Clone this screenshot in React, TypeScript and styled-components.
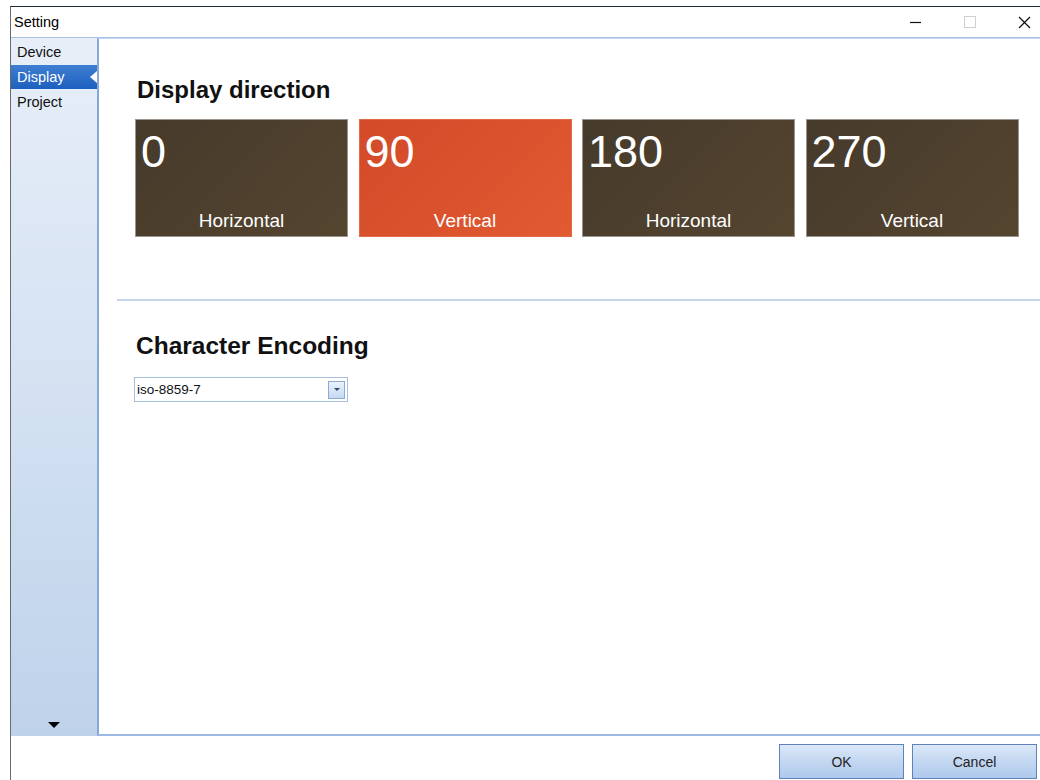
import React, { useState } from 'react';
import styled, { createGlobalStyle } from 'styled-components';

const GlobalStyle = createGlobalStyle`
  html, body {
    margin: 0;
    padding: 0;
    background: #fff;
    font-family: "Liberation Sans", Arial, sans-serif;
  }
`;

const Page = styled.div`
  padding: 6px 0 0 10px;
  width: 1040px;
  height: 780px;
  box-sizing: border-box;
  overflow: hidden;
`;

const Window = styled.div`
  display: flex;
  flex-direction: column;
  width: 1040px;
  height: 774px;
  border-top: 1px solid #1d2b3f;
  border-left: 1px solid #6a6a6a;
  background: #fff;
`;

const TitleBar = styled.div`
  display: flex;
  align-items: center;
  justify-content: space-between;
  height: 30px;
  border-bottom: 1px solid #a9c2e3;
  padding-left: 3px;
  font-size: 14.5px;
  color: #000;
`;

const Caption = styled.div`
  display: flex;
  align-items: center;
`;

const CaptionButton = styled.div<{ $dim?: boolean }>`
  width: 54px;
  height: 30px;
  display: flex;
  align-items: center;
  justify-content: center;
  color: ${(p) => (p.$dim ? '#c8c8c8' : '#111')};
`;

const Body = styled.div`
  display: flex;
  height: 698px;
`;

const Sidebar = styled.div`
  width: 86px;
  background: linear-gradient(180deg, #e7eef8 0%, #d6e3f3 45%, #bed2ea 100%);
  display: flex;
  flex-direction: column;
  padding-top: 2px;
  position: relative;
`;

const NavItem = styled.div<{ $active?: boolean }>`
  position: relative;
  height: 24px;
  line-height: 24px;
  padding-left: 6px;
  font-size: 14.5px;
  color: ${(p) => (p.$active ? '#fff' : '#111')};
  background: ${(p) => (p.$active ? 'linear-gradient(180deg, #3f7fd2 0%, #1d5fbf 100%)' : 'transparent')};
  margin-bottom: 1px;
`;

const NavPointer = styled.span`
  position: absolute;
  right: 0;
  top: 6px;
  width: 0;
  height: 0;
  border-top: 6px solid transparent;
  border-bottom: 6px solid transparent;
  border-right: 7px solid #fff;
`;

const ScrollArrow = styled.div`
  margin-top: auto;
  margin-bottom: 8px;
  align-self: center;
  width: 0;
  height: 0;
  border-left: 6px solid transparent;
  border-right: 6px solid transparent;
  border-top: 6px solid #000;
`;

const Content = styled.div`
  flex: 1;
  border-left: 2px solid #86a9d8;
  border-bottom: 2px solid #9ab8e0;
  border-top: 1px solid #c7d7ee;
  display: flex;
  flex-direction: column;
`;

const Section = styled.div`
  padding: 37px 0 0 36px;
`;

const Heading = styled.h2`
  margin: 0 0 15px 2px;
  font-size: 24px;
  font-weight: bold;
  color: #111;
  line-height: 28px;
`;

const TileRow = styled.div`
  display: flex;
  gap: 10.5px;
`;

const Tile = styled.div<{ $selected?: boolean }>`
  width: 213px;
  height: 118px;
  flex-shrink: 0;
  box-sizing: border-box;
  border: 1px solid ${(p) => (p.$selected ? '#e36a48' : '#9b958d')};
  background: ${(p) => (p.$selected
    ? 'linear-gradient(135deg, #d24a29 0%, #e15a31 100%)'
    : 'linear-gradient(135deg, #463a2b 0%, #54452f 100%)')};
  color: #fff;
  display: flex;
  flex-direction: column;
  justify-content: space-between;
  cursor: pointer;
`;

const TileAngle = styled.div`
  font-size: 45px;
  line-height: 46px;
  padding: 9px 0 0 5px;
  font-weight: 300;
`;

const TileLabel = styled.div`
  text-align: center;
  font-size: 19px;
  padding-bottom: 4px;
`;

const Divider = styled.hr`
  border: 0;
  height: 2px;
  background: #c6d5ea;
  margin: 62px 0 0 18px;
`;

const EncodingSection = styled.div`
  padding: 31px 0 0 35px;
`;

const EncodingHeading = styled(Heading)`
  font-size: 24.5px;
  margin-bottom: 17px;
`;

const Select = styled.div`
  width: 214px;
  height: 25px;
  box-sizing: border-box;
  border: 1px solid #a7bfdf;
  display: flex;
  align-items: center;
  justify-content: space-between;
  padding: 0 2px 0 2px;
  font-size: 13.5px;
  color: #111;
`;

const SelectButton = styled.div`
  width: 17px;
  height: 18px;
  box-sizing: border-box;
  border: 1px solid #8aa9d3;
  background: linear-gradient(180deg, #eaf2fc 0%, #c6d9f1 100%);
  display: flex;
  align-items: center;
  justify-content: center;
`;

const SmallArrow = styled.span`
  width: 0;
  height: 0;
  border-left: 3px solid transparent;
  border-right: 3px solid transparent;
  border-top: 3px solid #2d4a73;
`;

const Footer = styled.div`
  flex: 1;
  display: flex;
  justify-content: flex-end;
  align-items: flex-start;
  gap: 8px;
  padding: 8px 14px 0 0;
`;

const DialogButton = styled.button`
  width: 125px;
  height: 35px;
  border: 1px solid #5d83ba;
  background: linear-gradient(180deg, #dbe8f8 0%, #c3d7f1 50%, #aec9ec 100%);
  font-family: "Liberation Sans", Arial, sans-serif;
  font-size: 14px;
  color: #222;
  padding: 0;
`;

const tiles = [
  { angle: 0, label: 'Horizontal' },
  { angle: 90, label: 'Vertical' },
  { angle: 180, label: 'Horizontal' },
  { angle: 270, label: 'Vertical' },
];

export default function App() {
  const [direction, setDirection] = useState(90);

  return (
    <Page>
      <GlobalStyle />
      <Window>
        <TitleBar>
          <span>Setting</span>
          <Caption>
            <CaptionButton>
              <svg width="12" height="12" viewBox="0 0 12 12">
                <path d="M0 6.5h11" stroke="#111" strokeWidth="1.2" />
              </svg>
            </CaptionButton>
            <CaptionButton $dim>
              <svg width="12" height="12" viewBox="0 0 12 12">
                <rect x="0.5" y="0.5" width="11" height="11" fill="none" stroke="#cfcfcf" />
              </svg>
            </CaptionButton>
            <CaptionButton>
              <svg width="13" height="13" viewBox="0 0 13 13">
                <path d="M1 1l11 11M12 1L1 12" stroke="#111" strokeWidth="1.3" />
              </svg>
            </CaptionButton>
          </Caption>
        </TitleBar>
        <Body>
          <Sidebar>
            <NavItem>Device</NavItem>
            <NavItem $active>
              Display
              <NavPointer />
            </NavItem>
            <NavItem>Project</NavItem>
            <ScrollArrow />
          </Sidebar>
          <Content>
            <Section>
              <Heading>Display direction</Heading>
              <TileRow>
                {tiles.map((t) => (
                  <Tile
                    key={t.angle}
                    $selected={t.angle === direction}
                    onClick={() => setDirection(t.angle)}
                  >
                    <TileAngle>{t.angle}</TileAngle>
                    <TileLabel>{t.label}</TileLabel>
                  </Tile>
                ))}
              </TileRow>
            </Section>
            <Divider />
            <EncodingSection>
              <EncodingHeading>Character Encoding</EncodingHeading>
              <Select>
                <span>iso-8859-7</span>
                <SelectButton>
                  <SmallArrow />
                </SelectButton>
              </Select>
            </EncodingSection>
          </Content>
        </Body>
        <Footer>
          <DialogButton>OK</DialogButton>
          <DialogButton>Cancel</DialogButton>
        </Footer>
      </Window>
    </Page>
  );
}
